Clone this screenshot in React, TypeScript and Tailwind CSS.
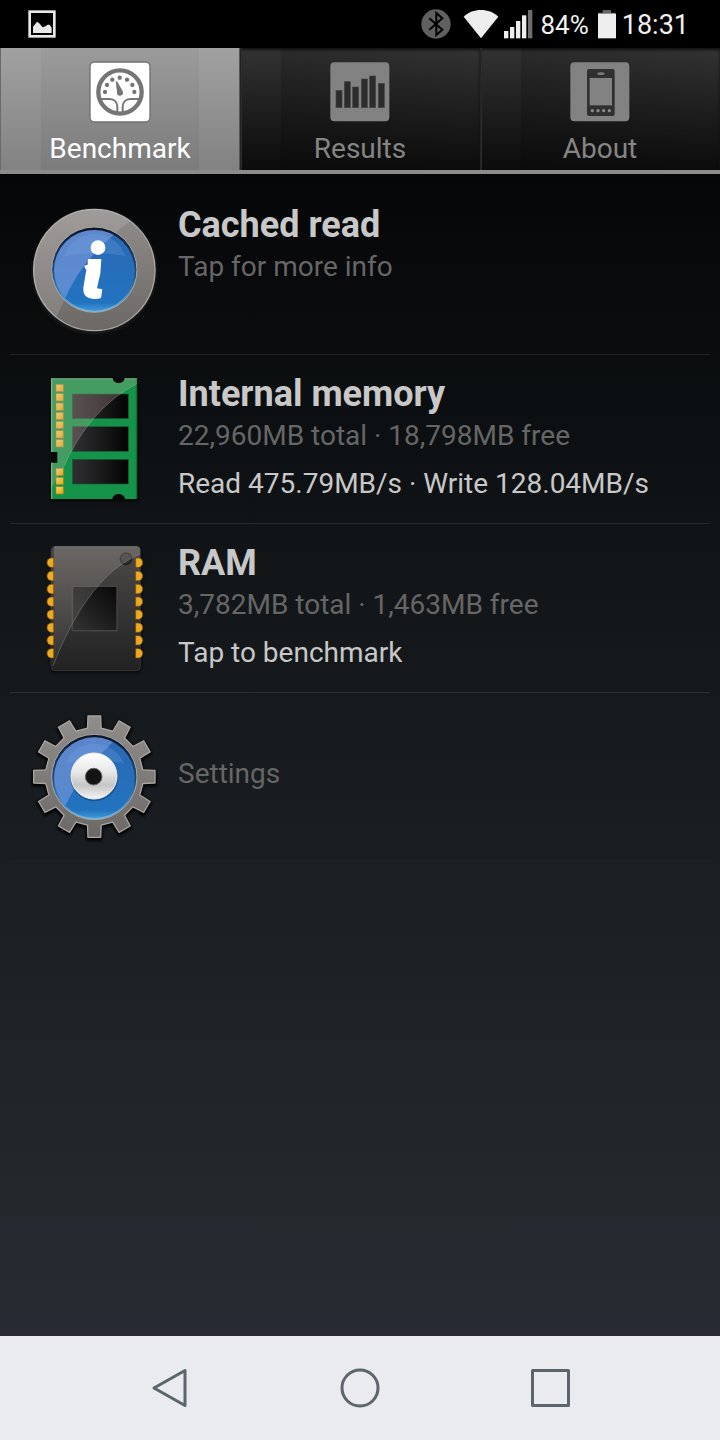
import type { ReactNode } from "react";

function PictureIcon() {
  return (
    <svg className="size-7" viewBox="0 0 84 84" aria-hidden="true">
      <rect x="5" y="5" width="74" height="74" fill="none" stroke="#e8e8e8" strokeWidth="8" />
      <path d="M15 69V50l12-15 6 4 11 13 8-3 7-5h6l6 9v16z" fill="#e8e8e8" />
    </svg>
  );
}

function BluetoothIcon() {
  return (
    <svg className="size-[30px]" viewBox="0 0 90 90" aria-hidden="true">
      <circle cx="45" cy="45" r="44" fill="#606060" />
      <path d="M25 28l39 34-18 16V12l18 16-39 34" fill="none" stroke="#000" strokeWidth="6" />
    </svg>
  );
}

function WifiIcon() {
  return (
    <svg className="h-[30px] w-9" viewBox="0 0 108 90" aria-hidden="true">
      <path d="M54 88L2 23C17 9 34 3 54 3s37 6 52 20z" fill="#eee" />
    </svg>
  );
}

function SignalIcon() {
  return (
    <svg className="size-[30px]" viewBox="0 0 90 90" aria-hidden="true">
      <g fill="#eee">
        <rect x="3" y="66" width="13" height="22" />
        <rect x="21" y="54" width="13" height="34" />
        <rect x="39" y="36" width="13" height="52" />
        <rect x="57" y="19" width="13" height="69" />
      </g>
      <rect x="75" y="3" width="13" height="85" fill="#6e6e6e" />
    </svg>
  );
}

function BatteryIcon() {
  return (
    <svg className="h-[30px] w-5" viewBox="0 0 60 90" aria-hidden="true">
      <path d="M17 3h25v8h13v8H3v-8h14z" fill="#666" />
      <rect x="3" y="14" width="54" height="74" fill="#eee" />
    </svg>
  );
}

function GaugeIcon() {
  const dots = [
    [45, 90], [51, 69], [67, 53], [89, 47], [111, 53], [127, 69], [133, 90],
  ];
  return (
    <svg className="size-[60px] overflow-visible" viewBox="0 0 180 180" aria-hidden="true">
      <rect x="-2" y="-2" width="184" height="184" rx="16" fill="#707070" />
      <rect x="2" y="2" width="176" height="176" rx="12" fill="#fff" />
      <circle cx="90" cy="90" r="65" fill="none" stroke="#757575" strokeWidth="13" />
      {dots.map(([x, y]) => (
        <circle key={`${x}-${y}`} cx={x} cy={y} r="6.5" fill="#757575" />
      ))}
      <path d="M77 58l5 1 16 28c3 9-1 14-8 14s-10-5-9-12z" fill="#757575" />
      <path
        d="M32 111h27c14 0 23 10 23 24v20M148 111h-27c-14 0-23 10-23 24v20"
        fill="none"
        stroke="#757575"
        strokeWidth="6"
      />
    </svg>
  );
}

function BarsIcon() {
  const bars = [
    [18, 85], [43, 59], [68, 75], [94, 51], [119, 42], [145, 64],
  ];
  return (
    <svg className="size-[60px]" viewBox="0 0 180 180" aria-hidden="true">
      <rect x="1" y="1" width="177" height="177" rx="12" fill="#828282" />
      {bars.map(([x, y]) => (
        <rect key={x} x={x} y={y} width="18" height={137 - y} fill="#2c2c2c" stroke="#454545" strokeWidth="2" />
      ))}
    </svg>
  );
}

function PhoneIcon() {
  return (
    <svg className="size-[60px]" viewBox="0 0 180 180" aria-hidden="true">
      <rect x="1" y="1" width="177" height="177" rx="12" fill="#828282" />
      <rect x="51" y="21" width="83" height="141" rx="6" fill="#303030" />
      <rect x="59" y="48" width="67" height="82" fill="#828282" />
      <ellipse cx="93" cy="35" rx="11" ry="4" fill="#7a7a7a" />
      {[67, 84, 101, 118].map((x) => (
        <circle key={x} cx={x} cy="146" r="5" fill="#8a8a8a" />
      ))}
    </svg>
  );
}

function IconDefs() {
  return (
    <svg className="absolute size-0" aria-hidden="true">
      <defs>
        <linearGradient id="metal" x1="0" y1="0" x2="0" y2="1">
          <stop offset="0" stopColor="#918d8b" />
          <stop offset="1" stopColor="#6c6865" />
        </linearGradient>
        <linearGradient id="blue" x1="0" y1="0" x2="0" y2="1">
          <stop offset="0" stopColor="#2b68b2" />
          <stop offset="0.9" stopColor="#2273c0" />
          <stop offset="1" stopColor="#3f97d6" />
        </linearGradient>
        <linearGradient id="blueRim" x1="0" y1="0" x2="0" y2="1">
          <stop offset="0" stopColor="#0c1626" />
          <stop offset="0.55" stopColor="#1d4f86" />
          <stop offset="1" stopColor="#6dbcec" />
        </linearGradient>
        <linearGradient id="hub" x1="0" y1="0" x2="0" y2="1">
          <stop offset="0" stopColor="#fff" />
          <stop offset="0.4" stopColor="#e8e8e8" />
          <stop offset="0.7" stopColor="#c6c6c6" />
          <stop offset="1" stopColor="#f4f4f4" />
        </linearGradient>
        <linearGradient id="slot" x1="0" y1="0" x2="1" y2="0">
          <stop offset="0" stopColor="#303033" />
          <stop offset="0.55" stopColor="#19191a" />
          <stop offset="1" stopColor="#030303" />
        </linearGradient>
        <linearGradient id="gold" x1="0" y1="0" x2="1" y2="1">
          <stop offset="0" stopColor="#ffd35c" />
          <stop offset="1" stopColor="#e2a212" />
        </linearGradient>
        <linearGradient id="chip" x1="0" y1="0" x2="0" y2="1">
          <stop offset="0" stopColor="#4c4a49" />
          <stop offset="0.6" stopColor="#333232" />
          <stop offset="1" stopColor="#222" />
        </linearGradient>
        <linearGradient id="chipGloss" x1="0" y1="0" x2="0" y2="1">
          <stop offset="0" stopColor="#c4bbb6" stopOpacity="0.26" />
          <stop offset="1" stopColor="#c4bbb6" stopOpacity="0.08" />
        </linearGradient>
        <linearGradient id="die" x1="1" y1="0" x2="0" y2="1">
          <stop offset="0" stopColor="#080808" />
          <stop offset="1" stopColor="#333" />
        </linearGradient>
        <filter id="soft" x="-20%" y="-20%" width="140%" height="140%">
          <feGaussianBlur stdDeviation="5" />
        </filter>
        <clipPath id="ringClip">
          <circle cx="223" cy="225" r="183" />
        </clipPath>
        <clipPath id="infoDiscClip">
          <circle cx="223" cy="226" r="121" />
        </clipPath>
        <clipPath id="discClip">
          <circle cx="223" cy="233" r="121" />
        </clipPath>
        <clipPath id="boardClip">
          <path d="M63 40H248C249 59 283 59 284 40H322V402H285C283 382 249 382 247 402H63V293H82V261H63Z" />
        </clipPath>
        <clipPath id="chipClip">
          <rect x="63" y="34" width="268" height="373" rx="12" />
        </clipPath>
      </defs>
    </svg>
  );
}

function InfoIcon() {
  return (
    <svg className="size-[150px] shrink-0" viewBox="0 0 450 450" aria-hidden="true">
      <circle cx="223" cy="229" r="187" fill="#1d1d1d" filter="url(#soft)" />
      <circle cx="223" cy="225" r="182" fill="url(#metal)" stroke="#aaa7a5" strokeWidth="4" />
      <g clipPath="url(#ringClip)">
        <path d="M30 30H375L328 80Q180 190 111 363L85 410H30Z" fill="#fff" opacity="0.13" />
      </g>
      <circle cx="223" cy="224" r="128" fill="url(#blueRim)" stroke="#aaa5a2" strokeWidth="3" />
      <circle cx="223" cy="226" r="121" fill="url(#blue)" />
      <g clipPath="url(#infoDiscClip)">
        <path d="M292 110Q185 196 133 314L80 330V90H292Z" fill="#93a6e6" opacity="0.5" />
      </g>
      <path d="M132 183A97 97 0 0 1 316 183Q224 166 132 183Z" fill="#79a6e8" opacity="0.25" />
      <circle cx="234" cy="158" r="22" fill="#fff" />
      <path
        d="M204 192H244L241 236Q234 264 231 280L247 283L243 309Q225 315 205 308Q188 302 190 278L199 224Q193 220 193 212L203 209Z"
        fill="#fff"
      />
    </svg>
  );
}

function MemoryIcon() {
  const pins = [58, 86, 114, 142, 169, 197, 224, 310, 337, 365];
  return (
    <svg className="h-[150px] w-[130px] shrink-0" viewBox="0 -3 390 450" aria-hidden="true">
      <rect x="63" y="44" width="262" height="366" fill="#000" opacity="0.6" filter="url(#soft)" />
      <g clipPath="url(#boardClip)">
        <rect x="60" y="38" width="265" height="368" fill="#15934a" />
        <path d="M63 41H322" stroke="#74b27e" strokeWidth="4" />
        <path d="M320 41V402" stroke="#0d7439" strokeWidth="5" />
        <path d="M65 40V402" stroke="#60ae75" strokeWidth="4" />
        {pins.map((y) => (
          <rect key={y} x="78" y={y} width="22" height="22" fill="url(#gold)" stroke="#8c8a2d" strokeWidth="2" />
        ))}
        {[87, 185, 283].map((y) => (
          <rect key={y} x="127" y={y} width="168" height="74" fill="url(#slot)" stroke="#125f33" strokeWidth="2" />
        ))}
        <path d="M60 38H325V54Q178 128 96 316L60 375Z" fill="#d8b8b0" opacity="0.25" />
        <path d="M323 55Q178 128 96 316" fill="none" stroke="#d5e5d5" strokeWidth="2" opacity="0.35" />
      </g>
    </svg>
  );
}

function ChipIcon() {
  const pins = [83, 123, 162, 200, 239, 278, 316, 355];
  return (
    <svg className="h-[150px] w-[130px] shrink-0" viewBox="0 -6 390 450" aria-hidden="true">
      <rect x="60" y="40" width="275" height="374" rx="14" fill="#000" opacity="0.6" filter="url(#soft)" />
      <rect x="63" y="34" width="268" height="373" rx="12" fill="url(#chip)" stroke="#343434" strokeWidth="3" />
      {pins.map((y) => (
        <g key={y} fill="#eda91f" stroke="#78520b" strokeWidth="2">
          <path d={`M71 ${y - 14}H64a13 14 0 0 0 0 28h7z`} />
          <path d={`M317 ${y - 14}h8a13 14 0 0 1 0 28h-8z`} />
        </g>
      ))}
      <rect x="127" y="154" width="134" height="133" fill="url(#die)" stroke="#464646" strokeWidth="4" />
      <circle cx="288" cy="71" r="17" fill="#343333" stroke="#1d1d1d" strokeWidth="4" />
      <g clipPath="url(#chipClip)">
        <path d="M72 34H331V57Q175 120 69 392L72 370Z" fill="url(#chipGloss)" />
        <path d="M331 57Q175 120 69 392" fill="none" stroke="#aaa" strokeWidth="3" opacity="0.35" />
      </g>
      <path d="M73 36H321" stroke="#777" strokeWidth="3" />
    </svg>
  );
}

function gearOutline(cx: number, cy: number) {
  const points: string[] = [];
  for (let tooth = 0; tooth < 12; tooth++) {
    const corners = [[-8, 147], [-6, 183], [6, 183], [8, 147]];
    for (const [offset, radius] of corners) {
      const angle = ((tooth * 30 + offset - 90) * Math.PI) / 180;
      points.push(`${(cx + radius * Math.cos(angle)).toFixed(1)},${(cy + radius * Math.sin(angle)).toFixed(1)}`);
    }
  }
  return points.join(" ");
}

function GearIcon() {
  return (
    <svg className="size-[150px] shrink-0" viewBox="0 6 450 450" aria-hidden="true">
      <polygon points={gearOutline(223, 235)} fill="#000" stroke="#000" strokeWidth="10" filter="url(#soft)" />
      <polygon
        points={gearOutline(223, 230)}
        fill="url(#metal)"
        stroke="#a8a4a1"
        strokeWidth="4"
        strokeLinejoin="round"
      />
      <circle cx="223" cy="231" r="128" fill="url(#blueRim)" stroke="#aaa5a2" strokeWidth="3" />
      <circle cx="223" cy="233" r="121" fill="url(#blue)" />
      <g clipPath="url(#discClip)">
        <path d="M291 115Q190 205 133 322L80 322V95H291Z" fill="#93a6e6" opacity="0.48" />
      </g>
      <path d="M134 190A97 97 0 0 1 312 190Q224 170 134 190Z" fill="#79a6e8" opacity="0.25" />
      <circle cx="223" cy="232" r="72" fill="#103b68" opacity="0.5" />
      <circle cx="222" cy="228" r="69" fill="url(#hub)" stroke="#f2f2f2" strokeWidth="3" />
      <circle cx="221" cy="230" r="25" fill="#141414" stroke="#676767" strokeWidth="3" />
    </svg>
  );
}

function Tab({ label, icon, active = false }: { label: string; icon: ReactNode; active?: boolean }) {
  return (
    <button
      type="button"
      role="tab"
      aria-selected={active}
      className={
        active
          ? "relative flex flex-col items-center gap-[11px] bg-linear-to-b from-[#a1a1a1] to-[#828282] pt-[14px] pb-[5px] text-white shadow-[inset_1px_0_#6a6a6a,inset_-1px_0_#555]"
          : "relative flex flex-col items-center gap-[11px] bg-linear-to-b from-[#333333] to-[#0c0c0c] pt-[14px] pb-[5px] text-[#858585] shadow-[inset_1px_0_#222,inset_2px_0_#2e2e2e,inset_0_2px_3px_#111]"
      }
    >
      <span
        className={
          active
            ? "absolute inset-y-0 right-[17%] left-[17%] bg-linear-to-b from-black/4 to-black/5"
            : "absolute inset-y-0 right-0 left-[17%] bg-linear-to-r from-black/15 to-transparent"
        }
      />
      <span className="relative">{icon}</span>
      <span className="relative text-[28px] leading-8">{label}</span>
    </button>
  );
}

function Row({ icon, title, detail, status }: { icon: ReactNode; title?: string; detail: string; status?: string }) {
  return (
    <li className="border-b border-[#7f8b93]/18 last:border-[#7f8b93]/6">
      <button type="button" className="flex h-[168px] w-full items-center text-left">
        <span className="ml-[10px] flex w-[150px] shrink-0 justify-center">{icon}</span>
        {title ? (
          <span className="ml-2 flex min-w-0 flex-col self-start pt-[18px]">
            <span className="text-[36px] leading-[42px] font-bold text-[#c8c8c8]">{title}</span>
            <span className="mt-[3px] text-[28px] leading-9 text-[#666]">{detail}</span>
            {status && <span className="mt-3 text-[28px] leading-9 text-[#c8c8c8]">{status}</span>}
          </span>
        ) : (
          <span className="ml-2 pb-[6px] text-[28px] leading-9 text-[#666]">{detail}</span>
        )}
      </button>
    </li>
  );
}

export default function App() {
  return (
    <div className="flex min-h-screen flex-col bg-black font-[Roboto,sans-serif]">
      <IconDefs />
      <header className="flex h-12 items-center justify-between pr-[31px] pl-7 text-[#f0f0f0]">
        <PictureIcon />
        <div className="flex items-center">
          <BluetoothIcon />
          <span className="ml-3 flex"><WifiIcon /></span>
          <span className="ml-1 flex"><SignalIcon /></span>
          <span className="ml-[7px] pt-[2px] text-[26px] leading-8">84%</span>
          <span className="ml-2 flex"><BatteryIcon /></span>
          <span className="ml-[5px] pt-[2px] text-[27px] leading-8">18:31</span>
        </div>
      </header>
      <nav role="tablist" aria-label="Sections" className="grid grid-cols-3 border-b-4 border-[#8c8c8c]">
        <Tab label="Benchmark" icon={<GaugeIcon />} active />
        <Tab label="Results" icon={<BarsIcon />} />
        <Tab label="About" icon={<PhoneIcon />} />
      </nav>
      <main className="flex-1 bg-[linear-gradient(#050607,#0d1012_22%,#14181b_40%,#1a1e22_58%,#23262a_85%,#282b33)] px-[10px] pt-3">
        <ul>
          <Row icon={<InfoIcon />} title="Cached read" detail="Tap for more info" />
          <Row
            icon={<MemoryIcon />}
            title="Internal memory"
            detail="22,960MB total · 18,798MB free"
            status="Read 475.79MB/s · Write 128.04MB/s"
          />
          <Row icon={<ChipIcon />} title="RAM" detail="3,782MB total · 1,463MB free" status="Tap to benchmark" />
          <Row icon={<GearIcon />} detail="Settings" />
        </ul>
      </main>
      <footer className="grid h-[104px] grid-cols-3 bg-[#e9ebee] px-[75px]">
        <button type="button" aria-label="Back" className="flex items-center justify-center">
          <svg className="size-10" viewBox="0 0 40 40" fill="none" stroke="#5a666b" strokeWidth="3" strokeLinejoin="round">
            <path d="M35 2.5v35L4 20z" />
          </svg>
        </button>
        <button type="button" aria-label="Home" className="flex items-center justify-center">
          <svg className="size-10" viewBox="0 0 40 40" fill="none" stroke="#5a666b" strokeWidth="3">
            <circle cx="20" cy="20" r="18" />
          </svg>
        </button>
        <button type="button" aria-label="Recent apps" className="flex items-center justify-center">
          <svg className="size-10" viewBox="0 0 40 40" fill="none" stroke="#5a666b" strokeWidth="3" strokeLinejoin="round">
            <rect x="2.5" y="2.5" width="36" height="35" />
          </svg>
        </button>
      </footer>
    </div>
  );
}
